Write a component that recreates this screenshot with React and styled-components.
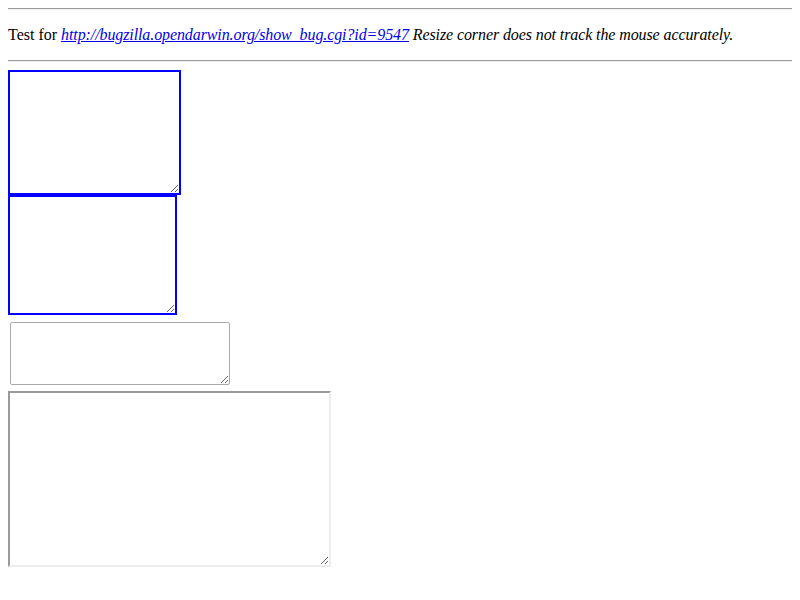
import styled, { createGlobalStyle, css } from "styled-components";

const GlobalStyle = createGlobalStyle`
  body {
    margin: 8px;
    background: #fff;
    color: #000;
    font-family: "Liberation Serif", "Times New Roman", serif;
    font-size: 16px;
  }
`;

const Rule = styled.hr`
  margin: ${(p) => (p.$first ? "0 0 8px" : "8px 0")};
  height: 0;
  border: none;
  border-top: 1px solid #9a9a9a;
  border-bottom: 1px solid #eeeeee;
`;

const Intro = styled.p`
  margin: 16px 0;
  line-height: 18px;
`;

const Note = styled.i`
  letter-spacing: -0.1px;
`;

const Link = styled.a`
  color: #0000ee;
  text-decoration: underline;
`;

const Stack = styled.div`
  display: flex;
  flex-direction: column;
  align-items: flex-start;
`;

const variants = {
  blue: css`
    border: 2px solid #0000ff;
  `,
  plain: css`
    border: 1px solid #a9a9a9;
    border-radius: 2px;
    margin: 7px 0 6px 2px;
  `,
  inset: css`
    border-style: solid;
    border-width: 2px;
    border-color: #9a9a9a #ededed #ededed #9a9a9a;
  `,
};

const Box = styled.textarea`
  box-sizing: border-box;
  display: block;
  margin: 0;
  padding: 2px;
  background: #fff;
  outline: none;
  resize: both;
  font-family: "Liberation Mono", monospace;
  font-size: 13px;
  width: ${(p) => p.$w}px;
  height: ${(p) => p.$h}px;
  ${(p) => variants[p.$kind]}
`;

export default function App() {
  return (
    <>
      <GlobalStyle />
      <Rule $first />
      <Intro>
        Test for{" "}
        <Note>
          <Link href="http://bugzilla.opendarwin.org/show_bug.cgi?id=9547">
            http://bugzilla.opendarwin.org/show_bug.cgi?id=9547
          </Link>{" "}
          Resize corner does not track the mouse accurately.
        </Note>
      </Intro>
      <Rule />
      <Stack>
        <Box $kind="blue" $w={173} $h={125} />
        <Box $kind="blue" $w={169} $h={120} />
        <Box $kind="plain" $w={220} $h={63} />
        <Box $kind="inset" $w={323} $h={176} />
      </Stack>
    </>
  );
}
